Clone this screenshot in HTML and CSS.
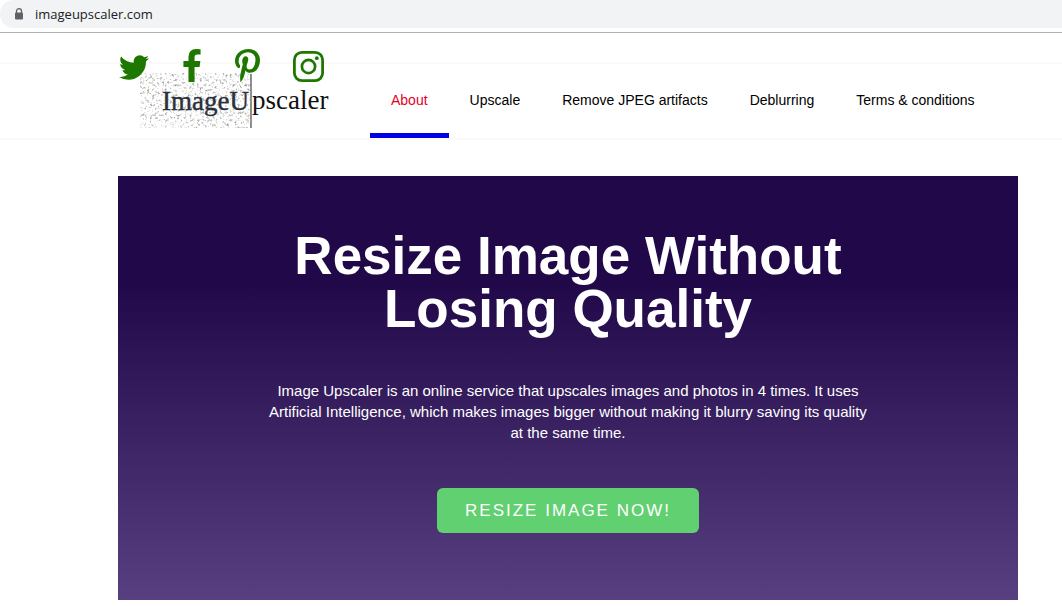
FILE: index.html
```html
<!DOCTYPE html>
<html lang="en">
<head>
    <meta charset="UTF-8">
    <meta name="viewport" content="width=device-width, initial-scale=1.0">
    <title>Image Upscaler</title>
    <link rel="stylesheet" href="styles.css">
</head>
<body>

    <div class="browser-bar">
        <div class="address">
            <svg class="lock" viewBox="0 0 10 12" aria-hidden="true">
                <path d="M2.5 5V3.2a2.5 2.5 0 0 1 5 0V5" fill="none" stroke="#5f6368" stroke-width="1.3"/>
                <rect x="1" y="4.5" width="8" height="7" rx="1" fill="#5f6368"/>
            </svg>
            <input class="address-input" type="text" value="imageupscaler.com" aria-label="Address">
        </div>
    </div>

    <div class="topbar">
        <div class="social">
            <a href="#" aria-label="Twitter">
                <svg class="twitter" viewBox="108 256 1576 1280"><path d="M1684 408q-67 98-162 167 1 14 1 42 0 130-38 259.5t-115.5 248.5-184.5 210.5-258 146-323 54.5q-271 0-496-145 35 4 78 4 225 0 401-138-105-2-188-64.5t-114-159.5q33 5 61 5 43 0 85-11-112-23-185.5-111.5t-73.5-205.5v-4q68 38 146 41-66-44-105-115t-39-154q0-88 44-163 121 149 294.5 238.5t371.5 99.5q-8-38-8-74 0-134 94.5-228.5t228.5-94.5q140 0 236 102 109-21 205-78-37 115-142 178 93-10 186-50z"/></svg>
            </a>
            <a href="#" aria-label="Facebook">
                <svg class="facebook" viewBox="479 0 864 1664"><path d="M1343 12v264h-157q-86 0-116 36t-30 108v189h293l-39 296h-254v759h-306v-759h-255v-296h255v-218q0-186 104-288.5t277-102.5q147 0 228 12z"/></svg>
            </a>
            <a href="#" aria-label="Pinterest">
                <svg class="pinterest" viewBox="256 0 1280 1664" preserveAspectRatio="none"><path d="M256 597q0-108 37.5-203.5t103.5-166.5 152-123 185-78 202-26q158 0 294 66.5t221 193.5 85 287q0 96-19 188t-60 177-100 149.5-145 103-189 38.5q-68 0-135-32t-96-88q-10 39-28 112.5t-23.5 95-20.5 71-26 71-32 62.5-46 77.5-62 86.5l-14 5-9-10q-15-157-15-188 0-92 21.5-206.5t66.5-287.5 52-203q-32-65-32-169 0-83 52-156t132-73q61 0 95 40.5t34 102.5q0 66-44 191t-44 187q0 63 45 104.5t109 41.5q55 0 102-25t78.5-68 56-95 38-110.5 20-111 6.5-99.5q0-173-109.5-269.5t-285.5-96.5q-200 0-334 129.5t-134 328.5q0 44 12.5 85t27 65 27 45.5 12.5 30.5q0 28-15 73t-37 45q-2 0-17-3-51-15-90.5-56t-61-94.5-32.5-108-11-106.5z"/></svg>
            </a>
            <a href="#" aria-label="Instagram">
                <svg class="instagram" viewBox="0 0 31 31">
                    <rect x="1.4" y="1.4" width="28.2" height="28.2" rx="7.5" fill="none" stroke="#1e7800" stroke-width="2.8"/>
                    <circle cx="15.5" cy="15.5" r="6.6" fill="none" stroke="#1e7800" stroke-width="2.7"/>
                    <circle cx="23.8" cy="7.2" r="1.9"/>
                </svg>
            </a>
        </div>
    </div>

    <header class="header">
        <a class="logo" href="#" aria-label="ImageUpscaler">
            <svg width="190" height="56" viewBox="0 0 190 56">
                <defs>
                    <filter id="noise" x="0" y="0" width="100%" height="100%" color-interpolation-filters="sRGB">
                        <feTurbulence type="fractalNoise" baseFrequency="0.4" numOctaves="2" seed="4"/>
                        <feColorMatrix type="matrix" values="1.2 0.2 0 0 0.32  1.2 0.2 0 0 0.32  1.2 0 0.2 0 0.32  0 0 0 0 1"/>
                    </filter>
                </defs>
                <rect x="0" y="1" width="111" height="55" filter="url(#noise)"/>
                <text class="logo-text logo-text-old" x="22" y="38">ImageU</text>
                <text class="logo-text" x="112" y="37">pscaler</text>
                <path d="M111 2v54" stroke="#555" stroke-width="1.3"/>
            </svg>
        </a>
        <nav class="nav">
            <a class="nav-link active" href="#">About</a>
            <a class="nav-link" href="#">Upscale</a>
            <a class="nav-link" href="#">Remove JPEG artifacts</a>
            <a class="nav-link" href="#">Deblurring</a>
            <a class="nav-link" href="#">Terms &amp; conditions</a>
        </nav>
    </header>

    <main class="main">
        <section class="hero">
            <h1>Resize Image Without Losing Quality</h1>
            <p>Image Upscaler is an online service that upscales images and photos in 4 times. It uses Artificial Intelligence, which makes images bigger without making it blurry saving its quality at the same time.</p>
            <button type="button" class="hero-button">RESIZE IMAGE NOW!</button>
        </section>
    </main>

</body>
</html>
```
FILE: styles.css
```css
* {
    box-sizing: border-box;
}

body {
    margin: 0;
    background-color: #fff;
    color: #000;
    font-family: "Liberation Sans", Arial, sans-serif;
}

.browser-bar {
    height: 33px;
    border-bottom: 1px solid #b0b0b0;
}

.address {
    display: flex;
    align-items: center;
    gap: 11px;
    height: 28px;
    padding-left: 14px;
    border-radius: 14px 0 0 14px;
    background-color: #f1f3f4;
}

.lock {
    width: 10px;
    height: 12px;
}

.address-input {
    flex: 1;
    padding: 0;
    border: none;
    outline: none;
    background: none;
    color: #202124;
    font-family: "Open Sans", sans-serif;
    font-size: 13px;
}

.topbar {
    position: relative;
    height: 31px;
    border-bottom: 2px solid #fafafa;
}

/* the icons hang over the header below */
.social {
    position: absolute;
    top: 15px;
    left: 119px;
    display: flex;
    align-items: flex-end;
    gap: 33px;
    height: 34px;
}

.social a {
    display: flex;
}

.social svg {
    fill: #1e7800;
}

.twitter {
    width: 30px;
    height: 25px;
    margin-bottom: 2px;
}

.facebook {
    width: 20px;
    height: 33px;
}

.pinterest {
    width: 25px;
    height: 33px;
}

.instagram {
    width: 31px;
    height: 31px;
}

.header {
    display: flex;
    min-height: 76px;
    padding-left: 140px;
    border-bottom: 2px solid #fafafa;
}

.logo {
    display: block;
    width: 190px;
    margin: 8px 40px 0 0;
}

.logo svg {
    display: block;
}

.logo-text {
    font-family: "Liberation Serif", serif;
    font-size: 27px;
    fill: #111;
}

.logo-text-old {
    fill: #2a303c;
    stroke: #2a303c;
    stroke-width: 0.4;
}

.nav {
    display: flex;
}

.nav-link {
    padding: 28px 21px 0;
    border-bottom: 5px solid transparent;
    color: #000;
    font-size: 14px;
    line-height: 16px;
    text-decoration: none;
    white-space: nowrap;
}

.nav-link.active {
    border-bottom-color: #0000e6;
    color: #e6001e;
}

.main {
    padding: 36px 44px 6px 118px;
}

.hero {
    display: flex;
    flex-direction: column;
    align-items: center;
    padding: 53px 20px 67px;
    background: linear-gradient(#210949 25%, #573f80);
    color: #fff;
    text-align: center;
}

.hero h1 {
    max-width: 600px;
    margin: 0 0 45px;
    font-size: 53px;
    line-height: 53px;
}

.hero p {
    max-width: 600px;
    margin: 0 0 45px;
    font-size: 15px;
    line-height: 21px;
}

.hero-button {
    height: 45px;
    padding: 0 28px;
    border: none;
    border-radius: 6px;
    background-color: #61d070;
    color: #fff;
    font-family: inherit;
    font-size: 17px;
    letter-spacing: 2px;
    cursor: pointer;
}
```
